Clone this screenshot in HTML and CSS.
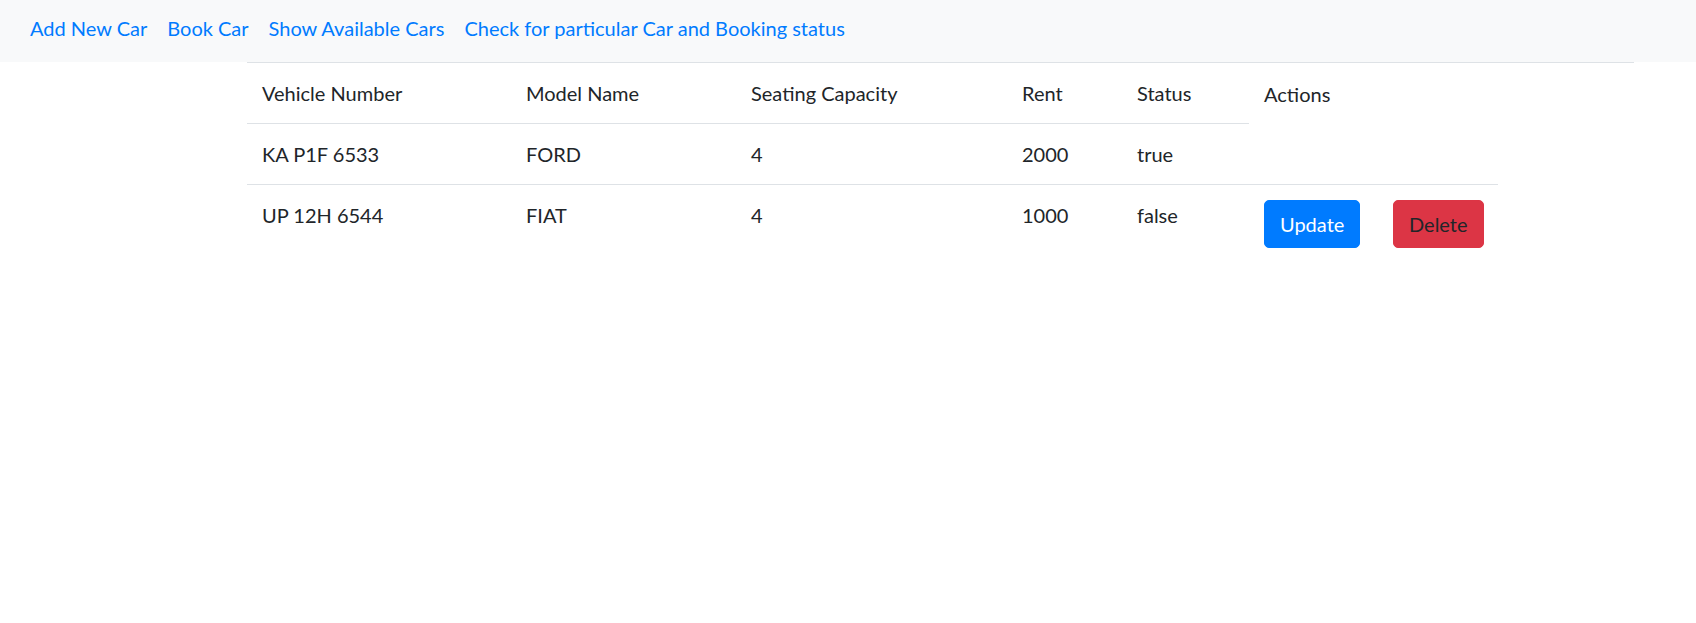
FILE: index.html
```html
<!DOCTYPE html>
<html lang="en">
<head>
<meta charset="utf-8">
<title>Car Rental</title>
<link rel="stylesheet" href="styles.css">
</head>
<body>
<nav class="navbar">
  <a class="nav-link" href="#">Add New Car</a>
  <a class="nav-link" href="#">Book Car</a>
  <a class="nav-link" href="#">Show Available Cars</a>
  <a class="nav-link" href="#">Check for particular Car and Booking status</a>
</nav>
<main class="content">
  <table class="cars">
    <colgroup>
      <col class="c-num"><col class="c-model"><col class="c-seat"><col class="c-rent"><col class="c-status"><col class="c-upd"><col class="c-del"><col class="c-rest">
    </colgroup>
    <thead>
      <tr>
        <th>Vehicle Number</th>
        <th>Model Name</th>
        <th>Seating Capacity</th>
        <th>Rent</th>
        <th>Status</th>
        <th colspan="3">Actions</th>
      </tr>
    </thead>
    <tbody>
      <tr>
        <td>KA P1F 6533</td>
        <td>FORD</td>
        <td>4</td>
        <td>2000</td>
        <td>true</td>
      </tr>
      <tr>
        <td>UP 12H 6544</td>
        <td>FIAT</td>
        <td>4</td>
        <td>1000</td>
        <td>false</td>
        <td><button class="btn btn-primary">Update</button></td>
        <td><button class="btn btn-danger">Delete</button></td>
      </tr>
    </tbody>
  </table>
</main>
</body>
</html>
```
FILE: styles.css
```css
* { box-sizing: border-box; }
body {
  margin: 0;
  font-family: "Lato", "Liberation Sans", sans-serif;
  font-size: 20px;
  line-height: 30px;
  color: #212529;
  background: #fff;
}
.navbar {
  display: flex;
  align-items: center;
  height: 62px;
  padding: 0 20px 6px;
  background: #f8f9fa;
}
.nav-link {
  padding: 0 10px;
  color: #007bff;
  text-decoration: none;
  line-height: 30px;
}
.content {
  padding-left: 247px;
}
.cars {
  width: 1387px;
  table-layout: fixed;
  border-collapse: collapse;
}
.c-num { width: 264px; }
.c-model { width: 225px; }
.c-seat { width: 271px; }
.c-rent { width: 115px; }
.c-status { width: 127px; }
.c-upd { width: 129px; }
.c-del { width: 120px; }
.c-rest { width: 136px; }
.cars th, .cars td {
  padding: 15px;
  border-top: 1px solid #dee2e6;
  text-align: left;
  vertical-align: top;
  font-weight: 400;
  white-space: nowrap;
}
.cars thead th { vertical-align: bottom; }
.btn {
  display: inline-block;
  vertical-align: top;
  font-family: inherit;
  font-size: 20px;
  line-height: 30px;
  padding: 8px 15px;
  border: 1px solid transparent;
  border-radius: 5px;
  cursor: pointer;
}
.btn-primary { background: #007bff; border-color: #007bff; color: #fff; }
.btn-danger { background: #dc3545; border-color: #dc3545; color: #212529; }
```
